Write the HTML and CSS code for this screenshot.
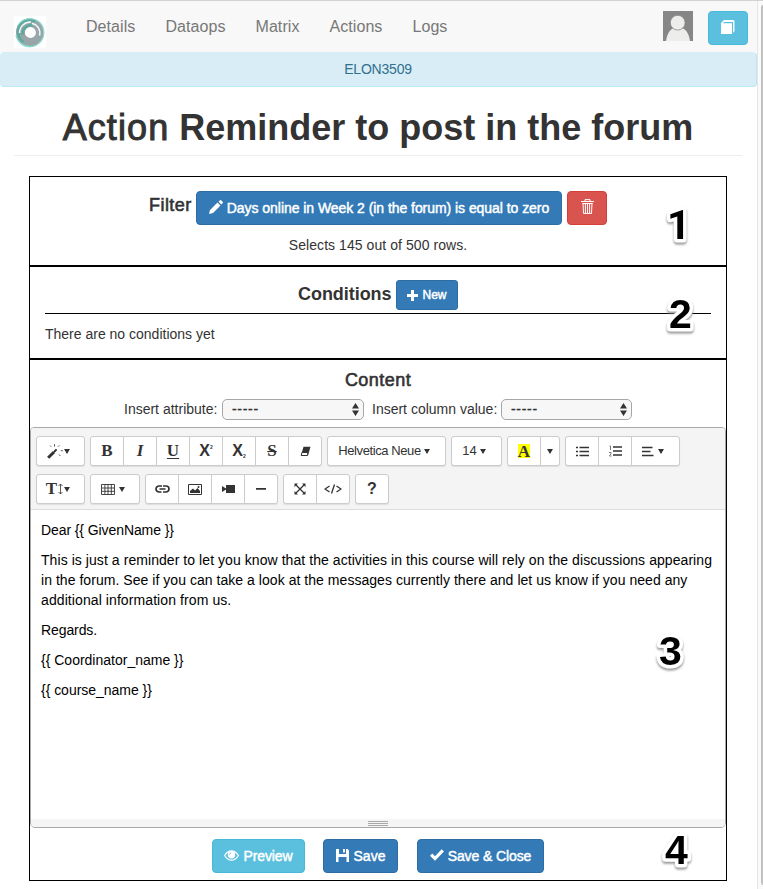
FILE: index.html
```html
<!DOCTYPE html>
<html lang="en">
<head>
<meta charset="utf-8">
<title>Action</title>
<link rel="stylesheet" href="styles.css">
</head>
<body>
<div class="window">
<div class="page">
  <nav class="nav">
    <svg class="logo" width="32" height="32" viewBox="0 0 32 32"><rect width="32" height="32" fill="#fff"/><circle cx="16" cy="16.500" r="9.500" fill="none" stroke="#98a5a9" stroke-width="9"/><path d="M5.500 21a11.500 11.500 0 0 1 16-15.500M9.500 26A12 12 0 0 1 4.500 13M9 19a8 8 0 0 1 10-9.500" fill="none" stroke="#5fa8a0" stroke-width="2.600"/><path d="M3.500 10a14 14 0 1 1 2 16" fill="none" stroke="#8fdccd" stroke-width="1.200"/><path d="M5.500 17A11 11 0 0 1 17 6M18 7.500a9.500 9.500 0 0 1 7.500 12" fill="none" stroke="#f0fbf8" stroke-width="1.400"/><path d="M2 19a14 14 0 0 0 18 11" fill="none" stroke="#7fdcc9" stroke-width="1.200"/><circle cx="16.500" cy="16.500" r="5.400" fill="#fff"/></svg>
    <div class="links"><a>Details</a><a>Dataops</a><a>Matrix</a><a>Actions</a><a>Logs</a></div>
    <svg class="avatar" width="30" height="30" viewBox="0 0 30 30"><rect width="30" height="30" fill="#868686"/><path d="M3 30C4 23 7 18.500 10 17.500h10c3 1 6 5.500 7 12.500z" fill="#ededeb"/><circle cx="14.700" cy="11.700" r="7.400" fill="#ededeb" stroke="#868686" stroke-width=".8"/></svg>
    <a class="btn info book"><svg width="14" height="15" viewBox="0 0 14 15"><path d="M0 3l3-3h9.500l1 1v10l-1.500 2V2H3L1.800 3.200H11V14H0z" fill="#fff"/></svg></a>
  </nav>
  <div class="course">ELON3509</div>
  <h1><span class="h-light">Action</span> <span class="h-bold">Reminder to post in the forum</span></h1>

  <main class="sections">
    <section class="filter">
      <div class="filter-row">
        <span class="heading f-title">Filter</span>
        <a class="btn primary f-main"><svg width="14" height="14" viewBox="0 0 14 14"><path d="M0 14l1-4 7.500-7.500 3 3L4 13zM9.500 1.700L11 .2q.5-.4 1 0l1.800 1.800q.4.500 0 1l-1.400 1.500z" fill="#fff"/></svg><span class="f-text">Days online in Week 2 (in the forum) is equal to zero</span></a>
        <a class="btn danger"><svg width="13" height="15" viewBox="0 0 13 15"><path d="M0 2.500h13M4 2V.6h5V2M1.500 4.500h10M2 4l.5 10.400h8L11 4M4.400 4.500v9.500M6.500 4.500v9.500M8.600 4.500v9.500" fill="none" stroke="#fff" stroke-width="1"/></svg></a>
      </div>
      <p class="selects-count"><span>Selects 145 out of 500 rows.</span></p>
    </section>

    <section class="conditions">
      <div class="cond-row"><span class="cond-title">Conditions</span><a class="btn primary new"><svg width="11" height="11" viewBox="0 0 11 11"><path d="M4 0h3v4h4v3H7v4H4V7H0V4h4z" fill="#fff"/></svg><span>New</span></a></div>
      <hr>
      <p class="none">There are no conditions yet</p>
    </section>

    <section class="content">
      <div class="heading c-title">Content</div>
      <div class="inserts">
        <label class="l1">Insert attribute:</label><div class="select s1"><span>-----</span><svg width="7" height="13" viewBox="0 0 7 13"><path d="M0 5.500L3.500 0 7 5.500zM0 7.500h7L3.500 13z" fill="#333"/></svg></div>
        <label class="l2">Insert column value:</label><div class="select s2"><span>-----</span><svg width="7" height="13" viewBox="0 0 7 13"><path d="M0 5.500L3.500 0 7 5.500zM0 7.500h7L3.500 13z" fill="#333"/></svg></div>
      </div>
      <div class="editor">
        <div class="toolbar">
          <div class="row">
            <div class="group w49"><b class="tb"><svg width="16" height="15" viewBox="0 0 16 15"><path d="M1.200 13.800L7 8" stroke="#333" stroke-width="3"/><path d="M7 8l2.600-2.600" stroke="#333" stroke-width="2"/><path d="M3 1.500l1.200 1.200M7.500.2v2.300M12.300 1.300L11 2.700M13.800 6.700h2M12 10.500l1.300 1.500" stroke="#555" stroke-width="1"/></svg><i class="caret"></i></b></div>
            <div class="group w232"><b class="tb serif">B</b><b class="tb serif it">I</b><b class="tb serif un">U</b><b class="tb xx">X<sup>2</sup></b><b class="tb xx">X<sub>2</sub></b><b class="tb serif st">S</b><b class="tb"><svg width="11" height="11" viewBox="0 0 11 11"><path d="M3.500.8h7L8 9.500H1z" fill="#333"/><path d="M2 6.500h6L7.300 9.500H1.200z" fill="#fff" stroke="#333"/></svg></b></div>
            <div class="group w119"><b class="tb label"><span class="font-name">Helvetica Neue</span><i class="caret"></i></b></div>
            <div class="group w51"><b class="tb label"><span>14</span><i class="caret"></i></b></div>
            <div class="group w53"><b class="tb serif"><span class="mark">A</span></b><b class="tb narrow"><i class="caret solo"></i></b></div>
            <div class="group w115"><b class="tb"><svg width="13" height="11" viewBox="0 0 13 11"><path d="M0 1.500h2M0 5.500h2M0 9.500h2M3.500 1.500H13M3.500 5.500H13M3.500 9.500H13" stroke="#333" stroke-width="1.500"/></svg></b><b class="tb"><svg width="13" height="12" viewBox="0 0 13 12"><path d="M4 2h9M4 6h9M4 10h9" stroke="#333" stroke-width="1.500"/><path d="M.5 1h1v4M0 7.500h2v1.500L.5 10.500V11H2.500" fill="none" stroke="#555" stroke-width=".8"/></svg></b><b class="tb wide"><svg width="12" height="11" viewBox="0 0 12 11"><path d="M0 1.500h10.500M0 5.500h8.500M0 9.500h11.500" stroke="#333" stroke-width="1.600"/></svg><i class="caret"></i></b></div>
          </div>
          <div class="row">
            <div class="group w49"><b class="tb serif th">T<svg width="5" height="12" viewBox="0 0 5 12"><path d="M2.500 1v10M.5 3l2-2 2 2M.5 9l2 2 2-2" fill="none" stroke="#333" stroke-width=".8"/></svg><i class="caret"></i></b></div>
            <div class="group w50"><b class="tb"><svg width="14" height="11" viewBox="0 0 14 11"><path d="M.5.500h13v10H.5zM.5 4h13M.5 7.300h13M3.900.500v10M7 .5v10M10.300.500v10" fill="none" stroke="#333" stroke-width=".9"/></svg><i class="caret"></i></b></div>
            <div class="group w133"><b class="tb"><svg width="15" height="9" viewBox="0 0 15 9"><path d="M7 1H4a3 3 0 0 0 0 6h2.500M8 1h3a3 3 0 0 1 0 6H8M4.500 4h6" fill="none" stroke="#333" stroke-width="1.700"/></svg></b><b class="tb"><svg width="14" height="11" viewBox="0 0 14 11"><path d="M.5.500h13v10H.5z" fill="none" stroke="#333"/><path d="M2 9V7l3-2.500L7 6.500 9.500 4 12 7v2z" fill="#333"/><circle cx="10.500" cy="3" r="1" fill="#333"/></svg></b><b class="tb"><svg width="13" height="8" viewBox="0 0 13 8"><path d="M4 0h9v8H4zM0 1l4 2.500v1L0 7z" fill="#333"/></svg></b><b class="tb"><svg width="10" height="2" viewBox="0 0 10 2"><path d="M0 0h10v1.700H0z" fill="#333"/></svg></b></div>
            <div class="group w67"><b class="tb"><svg width="12" height="12" viewBox="0 0 12 12"><path d="M1.500 1.500l9 9M10.500 1.500l-9 9" stroke="#333" stroke-width="1.300"/><path d="M.5.500H4L.5 4zM8 .5h3.500V4zM.5 8v3.500H4zM11.500 8v3.500H8z" fill="#333"/></svg></b><b class="tb"><svg width="18" height="10" viewBox="0 0 18 10"><path d="M5.500 2L1 5l4.500 3M12.500 2L17 5l-4.500 3M10.500.5l-3 9" fill="none" stroke="#333" stroke-width="1.300"/></svg></b></div>
            <div class="group w34"><b class="tb q">?</b></div>
          </div>
        </div>
        <div class="text">
          <p><span class="t1">Dear {{ GivenName }}</span></p>
          <p><span class="t2">This is just a reminder to let you know that the activities in this course will rely on the discussions appearing</span><br><span class="t3">in the forum. See if you can take a look at the messages currently there and let us know if you need any</span><br><span class="t4">additional information from us.</span></p>
          <p><span class="t5">Regards.</span></p>
          <p><span class="t6">{{ Coordinator_name }}</span></p>
          <p><span class="t7">{{ course_name }}</span></p>
        </div>
        <div class="grip"><i></i><i></i><i></i></div>
      </div>
      <div class="actions">
        <a class="btn info a1"><svg width="15" height="11" viewBox="0 0 15 11"><path d="M.6 5.500C3 1.500 5 .8 7.500.8s4.500.7 6.900 4.700C12 9.500 10 10.200 7.500 10.200S3 9.500.6 5.500z" fill="none" stroke="#fff" stroke-width="1.200"/><circle cx="7.500" cy="4.800" r="3.700" fill="#fff"/><path d="M5.300 4.500A2 2 0 0 1 7 3" fill="none" stroke="#5bc0de" stroke-width=".9"/></svg><span>Preview</span></a>
        <a class="btn primary a2"><svg width="13" height="13" viewBox="0 0 13 13"><path d="M0 0h3v5h7V0h1.500L13 1.500V13h-2.500V8h-8v5H0zM7 0h2v3.500H7z" fill="#fff"/></svg><span>Save</span></a>
        <a class="btn primary a3"><svg width="14" height="12" viewBox="0 0 14 12"><path d="M0 6.800L2.300 4.500 5 7.200 11.700.3 14 2.500 5 11.800z" fill="#fff"/></svg><span>Save &amp; Close</span></a>
      </div>
    </section>
  </main>
</div>
<div class="scroll"><div class="thumb"></div></div>
<svg class="pin p1" width="48" height="56"><text x="13" y="42">1</text></svg>
<svg class="pin p2" width="48" height="56"><text x="13" y="42">2</text></svg>
<svg class="pin p3" width="48" height="56"><text x="13" y="42">3</text></svg>
<svg class="pin p4" width="48" height="56"><text x="13" y="42">4</text></svg>
</div>
</body>
</html>
```
FILE: styles.css
```css
* { box-sizing: border-box; }
body { margin: 0; background: #fff; color: #333; font: 14px/20px "Liberation Sans", Arial, sans-serif; }
p, h1 { margin: 0; }
svg { display: block; flex: none; }
.window { position: relative; display: flex; width: 763px; height: 889px; overflow: hidden; border-top: 1px solid #d2d2d2; white-space: nowrap; }
.page { width: 757px; flex: none; }
.nav { display: flex; height: 51px; background: #f8f8f8; padding-left: 14px; }
.logo { margin-top: 15px; }
.links { display: flex; margin-left: 40px; width: 577px; padding-top: 16px; gap: 30px; color: #777; font-size: 16px; letter-spacing: .07px; }
.avatar { margin-top: 10px; }
.btn { display: flex; align-items: center; justify-content: center; height: 34px; border: 1px solid; border-radius: 4px; color: #fff; gap: 5px; -webkit-text-stroke: .45px #fff; flex: none; }
.info { background: #5bc0de; border-color: #46b8da; }
.primary { background: #337ab7; border-color: #2e6da4; }
.primary svg, .a1 svg { margin-bottom: 2px; }
.danger { background: #d9534f; border-color: #d43f3a; width: 40px; padding-bottom: 3px; }
.book { width: 40px; margin: 10px 0 0 15px; padding-bottom: 2px; }
.course { height: 35px; background: #d9edf7; border: 1px solid #bce8f1; border-top-color: #d9edf7; border-left: 0; border-radius: 4px; text-align: center; line-height: 32px; color: #31708f; letter-spacing: -.2px; }
h1 { height: 69px; margin: 0 15px 0 14px; border-bottom: 1px solid #eee; text-align: center; font-size: 36px; line-height: 40px; padding-top: 21px; font-weight: 400; white-space: pre; }
.h-light { -webkit-text-stroke: 1px #333; letter-spacing: 1.1px; }
.h-bold { font-weight: 700; }
.sections { width: 698px; margin: 20px 0 0 29px; }
section { border: 1px solid #000; }
.filter { height: 90px; padding-top: 14px; }
.filter-row { display: flex; padding-left: 119px; gap: 5px; }
.heading { font-size: 18px; -webkit-text-stroke: .6px #333; letter-spacing: .45px; }
.f-title { width: 42px; line-height: 29px; }
.f-main { width: 366px; gap: 4px; }
.f-text { letter-spacing: -.05px; }
.selects-count { text-align: center; margin-top: 10px; letter-spacing: .06px; }
.conditions { height: 93px; padding: 13px 15px 0; }
.cond-row { display: flex; padding-left: 253px; gap: 5px; }
.cond-title { width: 93px; font-size: 18px; font-weight: 700; line-height: 29px; letter-spacing: -.05px; }
.new { width: 62px; height: 30px; font-size: 12px; border-radius: 3px; gap: 4px; }
.conditions .new svg { margin: 0; }
hr { margin: 3px 0 10px; border: 0; border-top: 1px solid #000; }
.content { height: 522px; padding-top: 10px; }
.c-title { text-align: center; line-height: 20px; }
.inserts { display: flex; margin-top: 9px; height: 28px; padding-left: 94px; }
.l1 { width: 98px; }
.l2 { width: 129px; margin-left: 8px; }
.select { display: flex; align-items: center; justify-content: space-between; height: 21px; border: 1px solid #a6a6a6; border-radius: 5px; background: #f7f7f7; padding: 0 4px 0 9px; }
.select span { line-height: 16px; letter-spacing: .7px; padding-bottom: 1px; -webkit-text-stroke: .3px #333; }
.s1 { width: 142px; }
.s2 { width: 131px; }
.editor { display: flex; flex-direction: column; height: 401px; border: 1px solid #a9a9a9; border-radius: 4px 4px 5px 5px; overflow: hidden; }
.toolbar { height: 82px; background: #f4f4f4; border-bottom: 1px solid #ddd; padding: 8px 0 0 5px; display: flex; flex-direction: column; gap: 8px; flex: none; }
.row { display: flex; gap: 5px; }
.group { display: flex; height: 30px; border: 1px solid #ccc; border-radius: 3px; background: #fff; box-shadow: 0 1px 1px #ddd; }
.tb { flex: 1; display: flex; align-items: center; justify-content: center; gap: 2px; min-width: 0; font-size: 16px; }
.tb + .tb { border-left: 1px solid #ccc; }
.w49 { width: 49px; } .w232 { width: 232px; } .w119 { width: 119px; } .w51 { width: 51px; } .w53 { width: 53px; } .w115 { width: 115px; }
.w50 { width: 50px; } .w133 { width: 133px; } .w67 { width: 67px; } .w34 { width: 34px; }
.caret { width: 0; height: 0; margin-right: 5px; border: 3px solid transparent; border-top: 5px solid #333; border-bottom: 0; }
.solo { margin: 0; }
.serif { font-family: "Liberation Serif", serif; font-size: 17px; }
.it { font-style: italic; }
.un { text-decoration: underline; text-underline-offset: 2px; text-decoration-thickness: 1px; }
.st { text-decoration: line-through; text-decoration-thickness: 1px; }
.xx { gap: 0; font-size: 16px; }
.xx sup, .xx sub { font-size: 5px; line-height: 5px; }
.xx sup { margin-bottom: 8px; }
.xx sub { margin-top: 10px; }
.label { font-weight: 400; font-size: 13px; gap: 3px; }
.font-name { letter-spacing: -.4px; }
.mark { background: #ff0; width: 12px; height: 14px; line-height: 15px; display: flex; justify-content: center; }
.narrow { flex: 0 0 19px; }
.wide { flex: 0 0 48px; gap: 4px; }
.w50 .tb { gap: 4px; }
.w49 .tb { gap: 1px; }
.q { font-size: 16px; }
.text { flex: 1; padding: 10px; color: #000; }
.text p { margin-bottom: 10px; }
.t1 { letter-spacing: -.09px; }
.t2 { letter-spacing: .064px; }
.t3 { letter-spacing: .042px; }
.t4 { letter-spacing: .09px; }
.t5 { letter-spacing: -.1px; }
.t7 { letter-spacing: -.03px; }
.grip { height: 8px; background: #f5f5f5; display: flex; flex-direction: column; align-items: center; gap: 1px; padding-top: 2px; }
.grip i { width: 20px; height: 1px; background: #a9a9a9; flex: none; }
.actions { display: flex; margin-top: 11px; padding-left: 182px; }
.a1 { width: 93px; gap: 4px; }
.a2 { width: 75px; margin-left: 18px; }
.a3 { width: 127px; margin-left: 19px; gap: 4px; }
.a1 span, .a3 span { letter-spacing: -.1px; }
.scroll { width: 6px; border-left: 1px solid #e5e5e5; background: #fafafa; padding: 4px 0 0 3px; }
.thumb { height: 880px; background: #c2c2c2; border-radius: 2px 0 0 2px; }
.pin { position: absolute; overflow: visible; filter: drop-shadow(0 2px 1px #999); }
.pin text { font: bold 41px "Liberation Sans", Arial, sans-serif; fill: #000; stroke: #fff; stroke-width: 7px; stroke-linejoin: round; paint-order: stroke; }
.p1 { left: 654px; top: 196px; }
.pin.p1 text { font-family: Roboto, sans-serif; }
.p2 { left: 656px; top: 285px; }
.p3 { left: 646px; top: 622px; }
.p4 { left: 652px; top: 821px; }
```
